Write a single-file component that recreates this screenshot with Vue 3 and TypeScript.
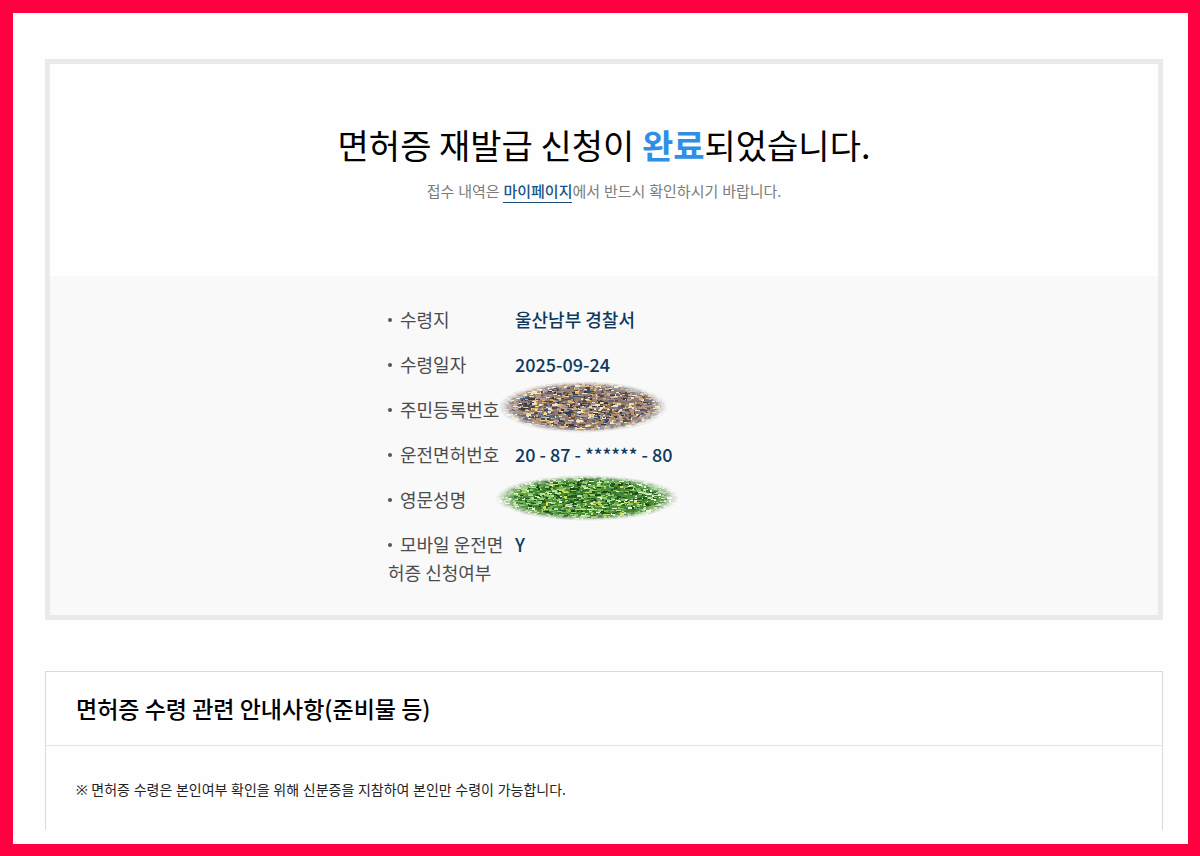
<script setup lang="ts">
interface Fleck {
  x: number
  y: number
  w: number
  h: number
  fill: string
}

interface Cover {
  id: string
  width: number
  height: number
  base: string
  flecks: Fleck[]
}

interface Detail {
  label: string
  value?: string
  cover?: Cover
}

function createRandom(seed: number): () => number {
  let state = seed
  return () => {
    state = (state * 1664525 + 1013904223) % 4294967296
    return state / 4294967296
  }
}

function createCover(id: string, width: number, height: number, base: string, palette: string[], seed: number): Cover {
  const random = createRandom(seed)
  const flecks: Fleck[] = []
  for (let i = 0; i < 2400; i++) {
    flecks.push({
      x: Math.floor(random() * width),
      y: Math.floor(random() * height),
      w: 2 + Math.floor(random() * 4),
      h: 1 + Math.floor(random() * 2),
      fill: palette[Math.floor(random() * palette.length)],
    })
  }
  return { id, width, height, base, flecks }
}

const gravel = createCover('gravel', 170, 52, '#8b7b74', [
  '#40363a', '#5a5158', '#36546f', '#5d6574', '#9b8079', '#b79788', '#86706c',
  '#c9a987', '#deb36e', '#f3d896', '#ece2d4', '#a99ba0', '#b5855a', '#59443b',
], 71)

const leaves = createCover('leaves', 184, 46, '#4b8c39', [
  '#1a4519', '#24591d', '#37752a', '#4b8e30', '#5fa544', '#75b859', '#93cd7a',
  '#b9e2a0', '#edf7dd', '#d3dd5a', '#3c7d37', '#245a25', '#93c964', '#6dab5b',
], 29)

const details: Detail[] = [
  { label: '수령지', value: '울산남부 경찰서' },
  { label: '수령일자', value: '2025-09-24' },
  { label: '주민등록번호', cover: gravel },
  { label: '운전면허번호', value: '20 - 87 - ****** - 80' },
  { label: '영문성명', cover: leaves },
  { label: '모바일 운전면허증 신청여부', value: 'Y' },
]
</script>

<template>
  <main class="page">
    <section class="result">
      <header class="result-head">
        <h1>면허증 재발급 신청이 <strong>완료</strong>되었습니다.</h1>
        <p>접수 내역은 <a href="#mypage">마이페이지</a>에서 반드시 확인하시기 바랍니다.</p>
      </header>
      <div class="result-body">
        <dl class="details">
          <div v-for="item in details" :key="item.label" class="row">
            <dt>{{ item.label }}</dt>
            <dd>
              {{ item.value }}
              <svg
                v-if="item.cover"
                :class="['cover', item.cover.id]"
                :width="item.cover.width"
                :height="item.cover.height"
                :viewBox="`0 0 ${item.cover.width} ${item.cover.height}`"
                aria-hidden="true"
              >
                <defs>
                  <radialGradient :id="`${item.cover.id}-fade`">
                    <stop offset="0.74" stop-color="#fff" />
                    <stop offset="0.86" stop-color="#fff" stop-opacity="0.6" />
                    <stop offset="0.93" stop-color="#fff" stop-opacity="0.2" />
                    <stop offset="1" stop-color="#fff" stop-opacity="0" />
                  </radialGradient>
                  <mask :id="`${item.cover.id}-mask`">
                    <rect width="100%" height="100%" :fill="`url(#${item.cover.id}-fade)`" />
                  </mask>
                </defs>
                <g :mask="`url(#${item.cover.id}-mask)`">
                  <rect width="100%" height="100%" :fill="item.cover.base" />
                  <rect
                    v-for="(fleck, i) in item.cover.flecks"
                    :key="i"
                    :x="fleck.x"
                    :y="fleck.y"
                    :width="fleck.w"
                    :height="fleck.h"
                    :fill="fleck.fill"
                  />
                </g>
              </svg>
            </dd>
          </div>
        </dl>
      </div>
    </section>

    <section class="notice">
      <h2>면허증 수령 관련 안내사항(준비물 등)</h2>
      <p>※ 면허증 수령은 본인여부 확인을 위해 신분증을 지참하여 본인만 수령이 가능합니다.</p>
    </section>
  </main>
</template>

<style>
body {
  margin: 0;
}
</style>

<style scoped>
.page {
  box-sizing: border-box;
  display: flex;
  flex-direction: column;
  gap: 51px;
  min-height: 100vh;
  padding: 46px 25px 14px 32px;
  border: 13px solid #ff0040;
  border-right-width: 12px;
  border-bottom-width: 12px;
  background: #fefefe;
  font-family: "Noto Sans CJK KR", "Noto Sans", sans-serif;
  color: #000;
}

.result {
  border: 5px solid #eaeaea;
}

.result-head {
  padding: 56px 20px 72px;
  text-align: center;
}

h1 {
  margin: 0;
  font-size: 34px;
  font-weight: 400;
  line-height: 50px;
}

h1 strong {
  font-weight: 700;
  color: #2f8fe6;
}

.result-head p {
  margin: 8px 0 0;
  font-family: "Noto Sans", "Noto Sans CJK KR", sans-serif;
  font-size: 15px;
  line-height: 26px;
  color: #7c7c7c;
}

.result-head a {
  padding-bottom: 1px;
  border-bottom: 1px solid #1d4f7c;
  font-weight: 500;
  color: #1d5588;
  text-decoration: none;
}

.result-body {
  padding: 29px 20px;
  background: #f9f9f9;
}

.details {
  display: flex;
  flex-direction: column;
  gap: 17px;
  max-width: 432px;
  margin: 0 auto;
  font-size: 18px;
  line-height: 28px;
}

.row {
  display: grid;
  grid-template-columns: 120px 1fr;
  column-gap: 7px;
}

dt {
  color: #4c4c4c;
}

dt::before {
  content: "";
  display: inline-block;
  width: 4px;
  height: 4px;
  margin: 0 8px 4px 0;
  border-radius: 50%;
  background: #555;
  vertical-align: middle;
}

dd {
  position: relative;
  margin: 0;
  font-weight: 500;
  color: #0d3a5e;
}

.cover {
  position: absolute;
}

.gravel {
  top: -14px;
  left: -17px;
}

.leaves {
  top: -10px;
  left: -20px;
}

.notice {
  flex: 1;
  border: 1px solid #d9d9d9;
  border-bottom: 0;
}

.notice h2 {
  margin: 0;
  padding: 19px 30px 20px;
  border-bottom: 1px solid #e5e5e5;
  font-size: 23px;
  font-weight: 500;
  line-height: 34px;
}

.notice p {
  margin: 0;
  padding: 32px 30px 28px;
  font-family: "Noto Sans", "Noto Sans CJK KR", sans-serif;
  font-size: 14px;
  line-height: 24px;
  color: #222;
}
</style>
